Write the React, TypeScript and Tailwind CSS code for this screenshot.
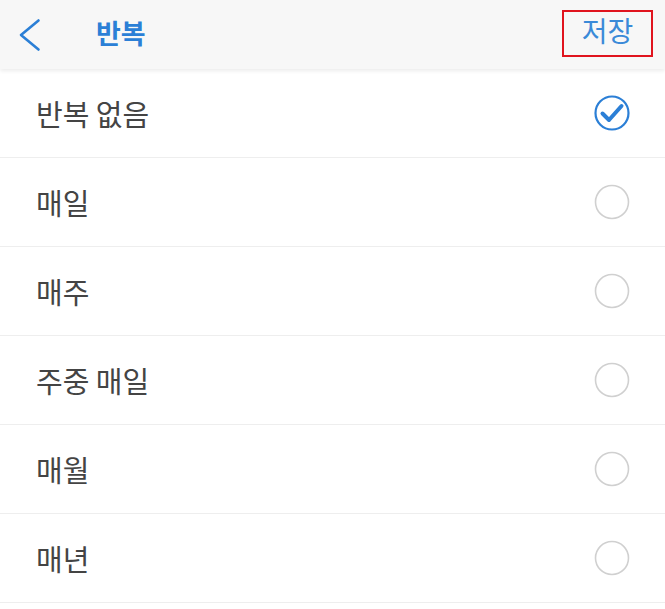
import React from "react";

const items = ["반복 없음", "매일", "매주", "주중 매일", "매월", "매년"];

function Checked() {
  return (
    <svg width="38" height="38" viewBox="0 0 38 38">
      <circle cx="19" cy="19" r="16.5" fill="none" stroke="#2b7fd6" strokeWidth="2.2" />
      <path d="M9.5 19.5 L16 26 L28.5 12" fill="none" stroke="#2b7fd6" strokeWidth="4" strokeLinecap="round" strokeLinejoin="round" />
    </svg>
  );
}

function Unchecked() {
  return (
    <svg width="38" height="38" viewBox="0 0 38 38">
      <circle cx="19" cy="19" r="16.5" fill="none" stroke="#d0d0d0" strokeWidth="1.6" />
    </svg>
  );
}

export default function App() {
  return (
    <div className="w-[665px] h-[609px] bg-white overflow-hidden" style={{ fontFamily: '"Noto Sans CJK KR", "Noto Sans", sans-serif' }}>
      <div className="relative z-10 h-[69px] bg-[#f7f7f7] shadow-[0_2px_4px_rgba(0,0,0,0.08)] flex items-center">
        <div className="w-[96px] pl-[16px] flex items-center">
          <svg width="26" height="36" viewBox="0 0 26 36">
            <path d="M22.5 3.5 L5 18 L22.5 32.5" fill="none" stroke="#2b7fd6" strokeWidth="2.6" strokeLinecap="round" strokeLinejoin="round" />
          </svg>
        </div>
        <div className="flex-1 text-[27px] font-bold text-[#2b7fd6] leading-none pb-[4px]">반복</div>
        <div className="mr-[12px] mt-[-2px] w-[91px] h-[47px] border-2 border-[#e0141e] flex items-center justify-center text-[28px] text-[#3a8ad8] leading-none pb-[8px]">
          저장
        </div>
      </div>
      <div>
        {items.map((t, i) => (
          <div key={t} className="h-[89px] border-b border-[#eeeeee] flex items-center justify-between pl-[36px] pr-[34px]">
            <span className="text-[29px] text-[#444444] leading-none">{t}</span>
            {i === 0 ? <Checked /> : <Unchecked />}
          </div>
        ))}
      </div>
    </div>
  );
}
